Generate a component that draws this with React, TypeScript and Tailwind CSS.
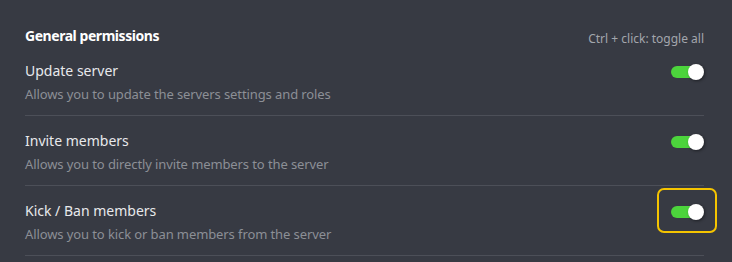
import React, { useState } from 'react';

type Perm = {
  id: string;
  title: string;
  desc: string;
  focused?: boolean;
};

const perms: Perm[] = [
  { id: 'update', title: 'Update server', desc: 'Allows you to update the servers settings and roles' },
  { id: 'invite', title: 'Invite members', desc: 'Allows you to directly invite members to the server' },
  { id: 'kick', title: 'Kick / Ban members', desc: 'Allows you to kick or ban members from the server', focused: true },
];

const Toggle: React.FC<{ on: boolean; focused?: boolean; onClick: () => void }> = ({ on, focused, onClick }) => (
  <button
    onClick={onClick}
    className={`-mb-[40px] -mr-[13px] -mt-[13px] flex h-[45px] w-[60px] items-center justify-center rounded-[7px] border-[2.5px] pt-[3px] ${
      focused ? 'border-[#f5c400]' : 'border-transparent'
    }`}
  >
    <span className="relative block h-[16px] w-[33px]">
      <span
        className={`absolute left-0 top-[2px] h-[12px] w-[26px] rounded-full ${on ? 'bg-[#4cd43c]' : 'bg-[#72767d]'}`}
      />
      <span
        className={`absolute top-0 h-[16px] w-[16px] rounded-full bg-white shadow-[1px_1px_3px_rgba(0,0,0,0.45)] ${
          on ? 'left-[17px]' : 'left-0'
        }`}
      />
    </span>
  </button>
);

export default function App() {
  const [state, setState] = useState<Record<string, boolean>>({ update: true, invite: true, kick: true });

  return (
    <div className="h-[262px] w-[732px] overflow-hidden bg-[#373a43] pl-[25px] pr-[28px] pt-[25px] font-['Noto_Sans',sans-serif]">
      <div className="flex items-baseline justify-between">
        <h2 className="text-[14px] font-bold leading-[21px] tracking-[-0.45px] text-white">General permissions</h2>
        <span className="translate-y-[2px] text-[12px] text-[#a3a6ad]">Ctrl + click: toggle all</span>
      </div>
      {perms.map((p) => (
        <div key={p.id} className="flex items-start justify-between border-b border-[#4c4f58] pb-[12px] pt-[15px]">
          <div>
            <div className="text-[14px] leading-[20px] text-[#e8e9ec]">{p.title}</div>
            <div className="mt-[4px] text-[13px] leading-[18px] tracking-[-0.1px] text-[#8c8f96]">{p.desc}</div>
          </div>
          <Toggle
            on={state[p.id]}
            focused={p.focused}
            onClick={() => setState((s) => ({ ...s, [p.id]: !s[p.id] }))}
          />
        </div>
      ))}
    </div>
  );
}
